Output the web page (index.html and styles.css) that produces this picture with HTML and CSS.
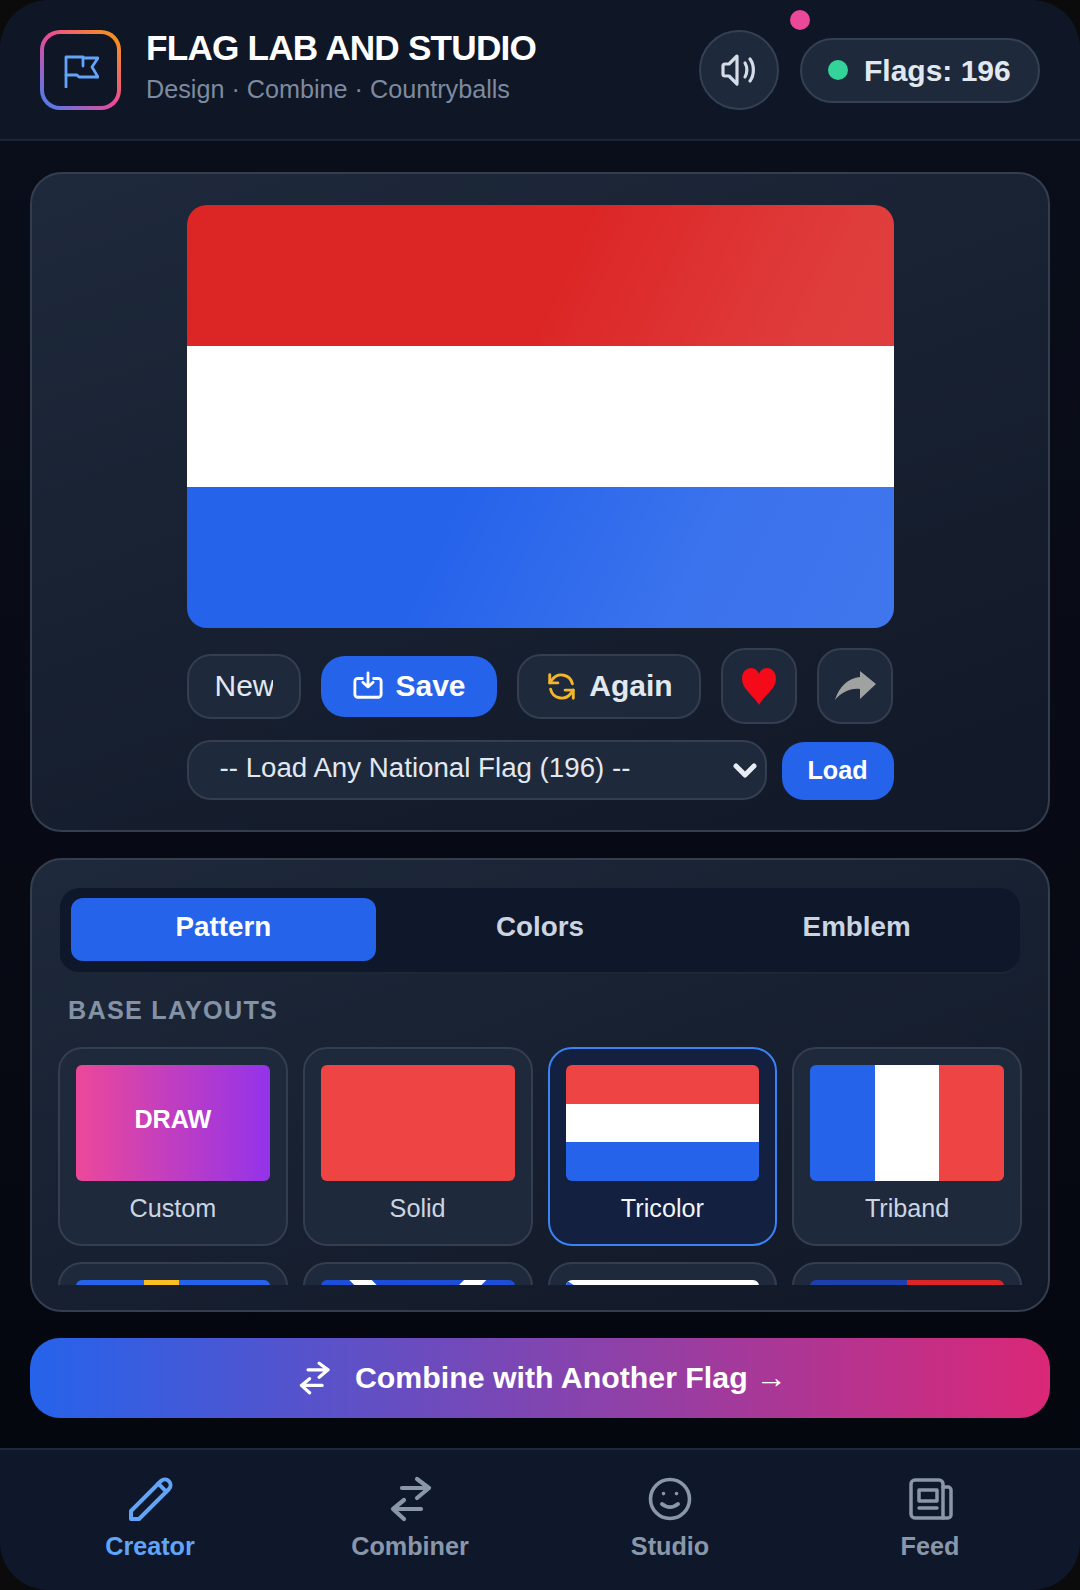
FILE: index.html
```html
<!DOCTYPE html>
<html lang="en">
<head>
    <meta charset="UTF-8">
    <meta name="viewport" content="width=device-width, initial-scale=1.0">
    <title>Flag Lab and Studio</title>
    <link rel="stylesheet" href="styles.css">
</head>
<body>
    <div class="app">
        <header class="topbar">
            <div class="logo">
                <svg class="logo-icon" viewBox="0 0 36 36" fill="none" stroke="currentColor" stroke-width="2.8" stroke-linejoin="round" stroke-linecap="round">
                    <path d="M3 35V5h17v9"/>
                    <path d="M21 6h14l-6 9 6 10H16l-2-2H3"/>
                </svg>
            </div>
            <div class="brand">
                <h1>FLAG LAB AND STUDIO</h1>
                <p>Design · Combine · Countryballs</p>
            </div>
            <button class="sound-btn">
                <svg viewBox="0 0 36 36" fill="none" stroke="currentColor" stroke-width="3.2" stroke-linejoin="round" stroke-linecap="round">
                    <path d="M16 4L8 12H4a2 2 0 0 0-2 2v8a2 2 0 0 0 2 2h4l8 8z"/>
                    <path d="M24 11c2.500 4 2.500 10 0 14"/>
                    <path d="M29 7c4.500 6 4.500 16 0 22"/>
                </svg>
            </button>
            <div class="flag-count">
                <span class="status-dot"></span>
                <span>Flags: 196</span>
            </div>
            <span class="notify-dot"></span>
        </header>

        <main class="content">
            <section class="card preview-card">
                <div class="preview-inner">
                    <div class="flag-preview">
                        <div class="stripe red"></div>
                        <div class="stripe white"></div>
                        <div class="stripe blue"></div>
                    </div>
                    <div class="action-row">
                        <button class="btn btn-new"><span>New</span></button>
                        <button class="btn btn-save">
                            <svg viewBox="0 0 32 32" fill="none" stroke="currentColor" stroke-width="3" stroke-linecap="round" stroke-linejoin="round">
                                <path d="M10 8H5a3 3 0 0 0-3 3v14a3 3 0 0 0 3 3h22a3 3 0 0 0 3-3V11a3 3 0 0 0-3-3h-5"/>
                                <path d="M16 2v15M10.500 12l5.500 5 5.500-5"/>
                            </svg>
                            Save
                        </button>
                        <button class="btn btn-again">
                            <svg viewBox="0 0 32 32" fill="none" stroke="#f2b52e" stroke-width="3.200" stroke-linecap="round" stroke-linejoin="round">
                                <path d="M28 13A12.500 12.500 0 0 0 6 8L3 12"/>
                                <path d="M3 3v9h9"/>
                                <path d="M4 19a12.500 12.500 0 0 0 22 5l3-4"/>
                                <path d="M29 29v-9h-9"/>
                            </svg>
                            Again
                        </button>
                        <button class="btn-square">
                            <svg class="heart" viewBox="0 0 36 38"><path d="M18 38C14 30 1 22 1 12 1 5 5 1 10 1 14 1 17 4 18 7 19 4 22 1 26 1 31 1 35 5 35 12 35 22 22 30 18 38z" fill="#f50a1a"/></svg>
                        </button>
                        <button class="btn-square btn-share">
                            <svg class="share" viewBox="0 0 41 30"><path d="M25 0l16 13-16 15V18C15 17 7 21 0 29 4 16 13 7 25 6z" fill="#a0a2a1"/></svg>
                        </button>
                    </div>
                    <div class="load-row">
                        <div class="select-wrap">
                            <select class="flag-select">
                                <option>-- Load Any National Flag (196) --</option>
                            </select>
                            <svg class="chevron" viewBox="0 0 24 16" fill="none" stroke="currentColor" stroke-width="5" stroke-linecap="round" stroke-linejoin="round"><path d="M3 3l9 9 9-9"/></svg>
                        </div>
                        <button class="btn-load">Load</button>
                    </div>
                </div>
            </section>

            <section class="card editor-card">
                <div class="tabs">
                    <button class="tab active">Pattern</button>
                    <button class="tab">Colors</button>
                    <button class="tab">Emblem</button>
                </div>
                <div class="section-label">BASE LAYOUTS</div>
                <div class="layout-grid">
                    <div class="layout-item">
                        <div class="thumb thumb-draw">DRAW</div>
                        <span>Custom</span>
                    </div>
                    <div class="layout-item">
                        <div class="thumb thumb-solid"></div>
                        <span>Solid</span>
                    </div>
                    <div class="layout-item selected">
                        <div class="thumb thumb-tricolor"><i></i><i></i><i></i></div>
                        <span>Tricolor</span>
                    </div>
                    <div class="layout-item">
                        <div class="thumb thumb-triband"><i></i><i></i><i></i></div>
                        <span>Triband</span>
                    </div>
                    <div class="layout-item">
                        <div class="thumb thumb-cross"></div>
                    </div>
                    <div class="layout-item">
                        <div class="thumb thumb-saltire">
                            <svg viewBox="0 0 196 116" preserveAspectRatio="none"><path d="M20-20l78 78-78 78M176-20L98 58l78 78" fill="none" stroke="#fff" stroke-width="16"/></svg>
                        </div>
                    </div>
                    <div class="layout-item">
                        <div class="thumb thumb-chevron">
                            <svg viewBox="0 0 196 116" preserveAspectRatio="none"><path d="M0 0L90 58 0 116z" fill="#2563eb"/></svg>
                        </div>
                    </div>
                    <div class="layout-item">
                        <div class="thumb thumb-quarter"></div>
                    </div>
                </div>
            </section>

            <button class="combine-btn">
                <svg viewBox="0 0 46 46" fill="none" stroke="currentColor" stroke-width="4.400" stroke-linecap="round" stroke-linejoin="round">
                    <path d="M15 12h27M30 3l12 9-12 10"/>
                    <path d="M34 33H7M17 24L6 33l11 10"/>
                </svg>
                <span>Combine with Another Flag <em>→</em></span>
            </button>
        </main>

        <nav class="bottom-nav">
            <a class="nav-item active">
                <svg viewBox="0 0 46 46" fill="none" stroke="currentColor" stroke-width="4" stroke-linecap="round" stroke-linejoin="round">
                    <path d="M4 35L34 5a5.660 5.660 0 0 1 8 8L12 43H4z"/>
                    <path d="M31.300 7.700l8 8"/>
                </svg>
                <span>Creator</span>
            </a>
            <a class="nav-item">
                <svg viewBox="0 0 46 46" fill="none" stroke="currentColor" stroke-width="4.200" stroke-linecap="round" stroke-linejoin="round">
                    <path d="M15 12h27M30 3l12 9-12 10"/>
                    <path d="M34 33H7M17 24L6 33l11 10"/>
                </svg>
                <span>Combiner</span>
            </a>
            <a class="nav-item">
                <svg viewBox="0 0 46 46" fill="none" stroke="currentColor" stroke-width="3.600" stroke-linecap="round" stroke-linejoin="round">
                    <circle cx="23" cy="23" r="19.500"/>
                    <path d="M15 28c5 4 11 4 16 0" stroke-width="4"/>
                    <path d="M16.500 17.500v.1M29.500 17.500v.1"/>
                </svg>
                <span>Studio</span>
            </a>
            <a class="nav-item">
                <svg viewBox="0 0 46 46" fill="none" stroke="currentColor" stroke-width="3.500" stroke-linecap="round" stroke-linejoin="round">
                    <path d="M4 8a4 4 0 0 1 4-4h24a4 4 0 0 1 4 4v34H8a4 4 0 0 1-4-4z"/>
                    <path d="M36 11h5a3 3 0 0 1 3 3v25a3 3 0 0 1-3 3h-5"/>
                    <path d="M12 14h18v11H12zM12 32h18"/>
                </svg>
                <span>Feed</span>
            </a>
        </nav>
    </div>
</body>
</html>
```

FILE: styles.css
```css
* {
    box-sizing: border-box;
}

body {
    margin: 0;
    background: #0b0b0b;
    font-family: "Liberation Sans", Arial, sans-serif;
    color: #e2e8f0;
}

button {
    font-family: inherit;
    cursor: pointer;
}

.app {
    width: 1080px;
    height: 1590px;
    display: flex;
    flex-direction: column;
    overflow: hidden;
    border-radius: 48px;
    background: #070b16;
}

/* header */
.topbar {
    position: relative;
    height: 141px;
    flex: none;
    display: flex;
    align-items: center;
    padding: 1px 40px 0;
    background: #0f1625;
    border-bottom: 2px solid #1d2635;
}

.logo {
    width: 81px;
    height: 80px;
    flex: none;
    display: flex;
    align-items: center;
    justify-content: center;
    border: 4px solid transparent;
    border-radius: 20px;
    background: linear-gradient(#0f1625, #0f1625) padding-box, linear-gradient(45deg, #3b82f6, #ec4899 50%, #f59e0b) border-box;
    color: #60a5fa;
}

.logo-icon {
    width: 36px;
    height: 36px;
}

.brand {
    margin-left: 25px;
    padding-bottom: 8px;
    flex: 1;
}

.brand h1 {
    margin: 0;
    font-size: 35.2px;
    line-height: 42px;
    letter-spacing: -0.8px;
    color: #fff;
}

.brand p {
    margin: 4px 0 0;
    font-size: 25.2px;
    line-height: 32px;
    color: #7d8aa0;
}

.sound-btn {
    width: 80px;
    height: 80px;
    flex: none;
    display: flex;
    align-items: center;
    justify-content: center;
    padding: 0;
    border: 2px solid #334155;
    border-radius: 50%;
    background: #1e293b;
    color: #d5dce7;
}

.sound-btn svg {
    width: 36px;
    height: 36px;
}

.flag-count {
    width: 240px;
    height: 65px;
    margin-left: 21px;
    flex: none;
    display: flex;
    align-items: center;
    gap: 16px;
    padding: 2px 0 0 26px;
    border: 2px solid #334155;
    border-radius: 33px;
    background: #1e293b;
    font-size: 30px;
    font-weight: bold;
}

.status-dot {
    width: 20px;
    height: 20px;
    margin-top: -2px;
    border-radius: 50%;
    background: #34d399;
}

.notify-dot {
    position: absolute;
    top: 10px;
    left: 790px;
    width: 20px;
    height: 20px;
    border-radius: 50%;
    background: #ec4899;
}

/* main area */
.content {
    flex: 1;
    display: flex;
    flex-direction: column;
    gap: 26px;
    padding: 31px 30px 30px;
    background: linear-gradient(#0a0e1a, #05070f);
}

.card {
    border: 2px solid #343e4e;
    border-radius: 32px;
    background: linear-gradient(160deg, #1e293b, #111827);
}

.preview-card {
    padding: 31px 0 30px;
}

.preview-inner {
    width: 707px;
    margin: 0 auto;
}

.flag-preview {
    height: 423px;
    display: flex;
    flex-direction: column;
    position: relative;
    overflow: hidden;
    border-radius: 20px;
}

.flag-preview::after {
    content: "";
    position: absolute;
    inset: 0;
    background: linear-gradient(115deg, rgba(255, 255, 255, 0) 45%, rgba(255, 255, 255, 0.1) 75%, rgba(255, 255, 255, 0.12));
}

.stripe {
    flex: 1;
}

.stripe.red {
    background: #dc2626;
}

.stripe.white {
    background: #fff;
}

.stripe.blue {
    background: #2563eb;
}

.action-row {
    display: flex;
    align-items: center;
    gap: 20px;
    margin-top: 20px;
}

.btn {
    height: 65px;
    flex: none;
    display: flex;
    align-items: center;
    justify-content: center;
    gap: 12px;
    padding: 0;
    border: 2px solid #343e4e;
    border-radius: 24px;
    background: #1e293b;
    color: #e2e8f0;
    font-size: 30px;
    font-weight: bold;
}

.btn-new {
    width: 114px;
    padding-left: 26px;
    justify-content: flex-start;
    font-weight: normal;
}

.btn-new span {
    width: 58px;
    overflow: hidden;
    white-space: nowrap;
}

.btn-save {
    width: 176px;
    height: 61px;
    padding-left: 2px;
    border: none;
    background: #2563eb;
    color: #fff;
}

.btn-save svg {
    width: 30px;
    height: 30px;
}

.btn-again {
    width: 184px;
    gap: 13px;
    padding-left: 3px;
}

.btn-again svg {
    width: 29px;
    height: 29px;
}

.btn-square {
    width: 76px;
    height: 76px;
    flex: none;
    display: flex;
    align-items: center;
    justify-content: center;
    padding: 0;
    border: 2px solid #343e4e;
    border-radius: 24px;
    background: #1e293b;
}

.btn-share {
    padding-left: 2px;
}

.heart {
    width: 36px;
    height: 38px;
}

.share {
    width: 41px;
    height: 30px;
}

.load-row {
    display: flex;
    align-items: flex-end;
    gap: 15px;
    margin-top: 16px;
}

.select-wrap {
    position: relative;
    flex: 1;
}

.flag-select {
    display: block;
    width: 100%;
    height: 60px;
    padding: 0 0 6px 31px;
    appearance: none;
    border: 2px solid #343e4e;
    border-radius: 24px;
    background: #1e293b;
    color: #e2e8f0;
    font-family: inherit;
    font-size: 27.7px;
}

.chevron {
    position: absolute;
    top: 23px;
    right: 10px;
    width: 24px;
    height: 16px;
    color: #e8edf3;
}

.btn-load {
    width: 112px;
    height: 58px;
    flex: none;
    padding: 0 0 2px;
    border: none;
    border-radius: 22px;
    background: #2563eb;
    color: #fff;
    font-size: 25.2px;
    font-weight: bold;
}

/* editor */
.editor-card {
    padding: 28px 26px 25px;
}

.tabs {
    display: flex;
    gap: 12px;
    height: 86px;
    margin: 0 2px;
    padding: 10px 11px 11px;
    border-bottom: 2px solid #1d2635;
    border-radius: 20px;
    background: #0f172a;
}

.tab {
    flex: 1;
    padding: 0 0 6px;
    border: none;
    border-radius: 12px;
    background: transparent;
    color: #cbd5e1;
    font-size: 27.8px;
    font-weight: bold;
}

.tab.active {
    background: #2563eb;
    color: #fff;
}

.section-label {
    margin: 21px 0 22px 10px;
    font-size: 25.2px;
    line-height: 30px;
    font-weight: bold;
    letter-spacing: 1.26px;
    color: #8492a6;
}

.layout-grid {
    display: grid;
    grid-template-columns: repeat(4, 1fr);
    grid-auto-rows: 199px;
    gap: 16px 15px;
    height: 238px;
    overflow: hidden;
}

.layout-item {
    display: flex;
    flex-direction: column;
    align-items: center;
    padding: 16px 16px 0;
    border: 2px solid #343e4e;
    border-radius: 24px;
    background: #1e293b;
    font-size: 25.2px;
    color: #cbd5e1;
}

.layout-item span {
    margin-top: 12px;
    line-height: 30px;
}

.layout-item.selected {
    border-color: #3b82f6;
    background: #13203f;
    color: #f1f5f9;
}

.thumb {
    width: 100%;
    height: 116px;
    flex: none;
    display: flex;
    overflow: hidden;
    border-radius: 6px;
}

.thumb svg {
    width: 100%;
    height: 100%;
}

.thumb-draw {
    align-items: center;
    justify-content: center;
    padding-bottom: 7px;
    background: linear-gradient(90deg, #ec4899, #9333ea);
    color: #fff;
    font-size: 25.2px;
    font-weight: bold;
}

.thumb-solid {
    background: #ef4444;
}

.thumb-tricolor {
    flex-direction: column;
}

.thumb-tricolor i,
.thumb-triband i {
    flex: 1;
}

.thumb-tricolor i:nth-child(1) {
    background: #ef4444;
}

.thumb-tricolor i:nth-child(2),
.thumb-triband i:nth-child(2) {
    background: #fff;
}

.thumb-tricolor i:nth-child(3),
.thumb-triband i:nth-child(1) {
    background: #2563eb;
}

.thumb-triband i:nth-child(3) {
    background: #ef4444;
}

.thumb-cross {
    background: linear-gradient(90deg, #2563eb 35%, #fbbf24 35%, #fbbf24 53%, #2563eb 53%);
}

.thumb-saltire {
    background: #1d4ed8;
}

.thumb-chevron {
    background: #fff;
}

.thumb-quarter {
    background: linear-gradient(90deg, #1e40af 50%, #dc2626 50%);
}

.combine-btn {
    height: 80px;
    flex: none;
    display: flex;
    align-items: center;
    justify-content: center;
    gap: 24px;
    padding: 0 0 0 4px;
    border: none;
    border-radius: 30px;
    background: linear-gradient(90deg, #2563eb, #db2777);
    color: #fff;
    font-size: 30.3px;
    font-weight: bold;
}

.combine-btn svg {
    width: 34px;
    height: 34px;
}

.combine-btn em {
    font-size: 31px;
    font-style: normal;
    font-weight: normal;
}

/* bottom nav */
.bottom-nav {
    height: 142px;
    flex: none;
    display: grid;
    grid-template-columns: repeat(4, 260px);
    padding-left: 20px;
    border-top: 2px solid #1e293b;
    background: #0f172a;
}

.nav-item {
    display: flex;
    flex-direction: column;
    align-items: center;
    padding-top: 26px;
    color: #8a97aa;
    font-size: 25.2px;
    font-weight: bold;
}

.nav-item svg {
    width: 46px;
    height: 46px;
}

.nav-item span {
    margin-top: 9px;
    line-height: 30px;
}

.nav-item.active {
    color: #60a5fa;
}
```
